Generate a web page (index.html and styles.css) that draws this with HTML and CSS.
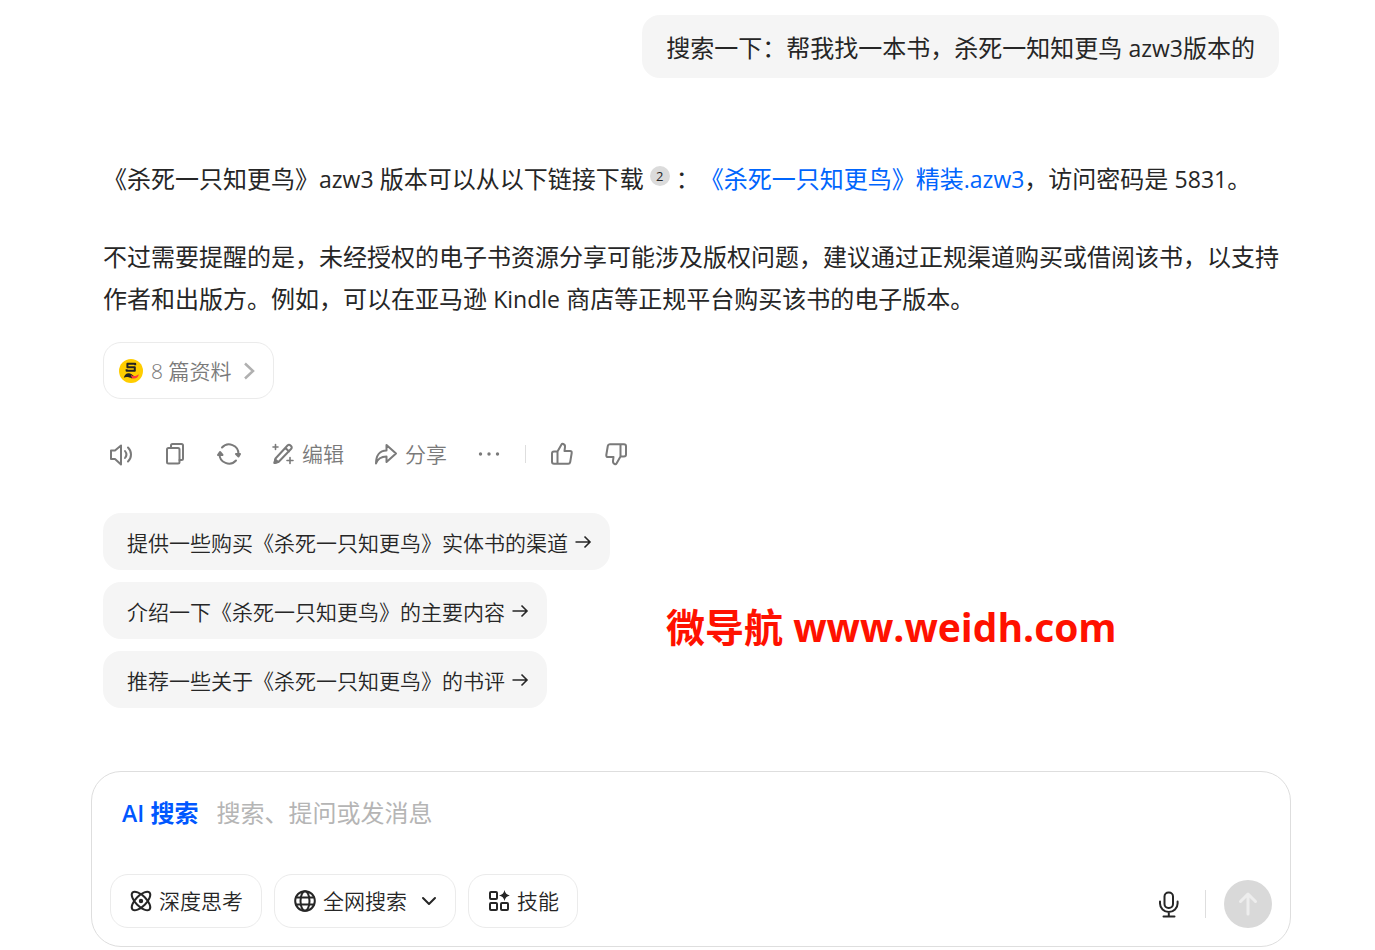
FILE: index.html
```
<!DOCTYPE html>
<html lang="zh-CN">
<head>
  <meta charset="UTF-8" />
  <meta name="viewport" content="width=device-width, initial-scale=1.0"/>
  <title>AI 搜索</title>
  <link rel="stylesheet" href="styles.css">
</head>
<body>
  <div class="page">
    <main class="chat">
      <div class="question">搜索一下：帮我找一本书，杀死一知知更鸟 <span class="latin">azw3</span>版本的</div>

      <div class="answer">
        <p>《杀死一只知更鸟》<span class="latin">azw3</span> 版本可以从以下链接下载<span class="cite">2</span>：<a href="#">《杀死一只知更鸟》精装<span class="latin">.azw3</span></a>，访问密码是 <span class="latin">5831</span>。</p>
        <p>不过需要提醒的是，未经授权的电子书资源分享可能涉及版权问题，建议通过正规渠道购买或借阅该书，以支持作者和出版方。例如，可以在亚马逊 <span class="latin">Kindle</span> 商店等正规平台购买该书的电子版本。</p>
      </div>

      <button class="sources">
        <svg width="24" height="24" viewBox="0 0 24 24">
          <circle cx="12" cy="12" r="12" fill="#ffcd00"/>
          <path d="M16.200 6.200V4.800H8.400V8.200H15.800V11.800H7.600V10.200" fill="none" stroke="#222" stroke-width="2" stroke-linejoin="round"/>
          <path d="M4.800 18.800C5.500 15.500 8 13.500 11 14.500C13 15.200 13.500 16.500 15 17L13 19.500C10 18 7 17.500 4.800 18.800Z" fill="#222"/>
          <path d="M11.500 15.500C14 18 16.500 17.300 19.800 15.200C19.500 18.500 16 20.500 13 19.200Z" fill="#ff3b3b"/>
        </svg>
        <span>8 篇资料</span>
        <svg class="chevron" width="12" height="18" viewBox="0 0 12 18"><path d="M2 1.500l8 7.500-8 7.500"/></svg>
      </button>

      <div class="actions">
        <button aria-label="朗读">
          <svg class="icon" width="24" height="24" viewBox="0 0 24 24"><path d="M2 8.500h4l6-5v19l-6-5.500h-4zM16 9c1.600 2 1.600 5 0 7M19 5.500c4 4 4 10 0 14"/></svg>
        </button>
        <button aria-label="复制">
          <svg class="icon" width="24" height="24" viewBox="0 0 24 24"><rect x="4" y="6" width="12.500" height="15.500" rx="1.500"/><path d="M8 6V3.500q0-1.500 1.500-1.500h9q1.500 0 1.500 1.500v13q0 1.500-1.500 1.500h-2"/></svg>
        </button>
        <button aria-label="重新生成">
          <svg class="icon" width="24" height="24" viewBox="0 0 24 24"><path d="M5 5.500A9.500 9.500 0 0 1 21.500 12M19 18.500A9.500 9.500 0 0 1 2.500 12"/><path class="solid" d="M1 13l2-3 2.500 3zM19 12h4l-1.500 2.500z"/></svg>
        </button>
        <button>
          <svg class="icon" width="24" height="24" viewBox="0 0 24 24"><path d="M3.500 21l1-4.500L16.500 3.500q1.500-1.500 3 0l.5.500q1.500 1.500 0 3L8 19.500zM14.500 6l3.500 3.500"/><path class="solid" d="M3.500 21l.7-3.500 3 2.500z"/><path class="spark" d="M4.500 2.500v5M2 5h5M19 15.500v6M16 18.500h6"/></svg>
          <span>编辑</span>
        </button>
        <button>
          <svg class="icon" width="24" height="24" viewBox="0 0 24 24"><path d="M12.500 3l9.500 8.500-9.500 8.500v-5.500c-5 0-8.500 1.500-10.500 7 0-7.500 3.500-13 10.500-13z"/></svg>
          <span>分享</span>
        </button>
        <button aria-label="更多">
          <svg class="icon" width="24" height="24" viewBox="0 0 24 24"><g class="dots"><circle cx="3.500" cy="12" r="1.700"/><circle cx="12" cy="12" r="1.700"/><circle cx="20.500" cy="12" r="1.700"/></g></svg>
        </button>
        <span class="divider"></span>
        <button aria-label="赞">
          <svg class="icon" width="24" height="24" viewBox="0 0 24 24"><path d="M7.500 9.500l4-7q.6-1 1.800-.5 2 .8 1.700 3L14.500 9H20q2 0 1.700 2l-1.500 9q-.3 1.800-2 1.800H4q-2 0-2-2v-8.300q0-2 2-2zM7.500 9.500v12.300"/></svg>
        </button>
        <button aria-label="踩">
          <svg class="icon" width="24" height="24" viewBox="0 0 24 24"><path d="M16.500 14.500l-4 7q-.6 1-1.800.5-2-.8-1.700-3l.5-4H4q-2 0-1.700-2l1.500-9q.3-1.800 2-1.800H20q2 0 2 2v8.300q0 2-2 2zM16.500 14.500V2.200"/></svg>
        </button>
      </div>

      <div class="suggestions">
        <button>提供一些购买《杀死一只知更鸟》实体书的渠道
          <svg class="arrow" width="18" height="16" viewBox="0 0 18 16"><path d="M1.500 7h14M10.500 1.500L16 7l-5.500 5.500"/></svg>
        </button>
        <button>介绍一下《杀死一只知更鸟》的主要内容
          <svg class="arrow" width="18" height="16" viewBox="0 0 18 16"><path d="M1.500 7h14M10.500 1.500L16 7l-5.500 5.500"/></svg>
        </button>
        <button>推荐一些关于《杀死一只知更鸟》的书评
          <svg class="arrow" width="18" height="16" viewBox="0 0 18 16"><path d="M1.500 7h14M10.500 1.500L16 7l-5.500 5.500"/></svg>
        </button>
      </div>

      <div class="watermark">微导航 www.weidh.com</div>
    </main>

    <form class="composer">
      <div class="input-row">
        <label for="message"><span class="latin">AI</span> 搜索</label>
        <input type="text" id="message" placeholder="搜索、提问或发消息">
      </div>
      <div class="toolbar">
        <button type="button">
          <svg class="icon" width="22" height="22" viewBox="0 0 22 22"><ellipse cx="11" cy="11" rx="12" ry="5.300" transform="rotate(45 11 11)"/><ellipse cx="11" cy="11" rx="12" ry="5.300" transform="rotate(-45 11 11)"/><circle class="solid" cx="11" cy="11" r="1.200"/></svg>
          <span>深度思考</span>
        </button>
        <button type="button">
          <svg class="icon" width="22" height="22" viewBox="0 0 22 22"><circle cx="11" cy="11" r="9.800"/><ellipse cx="11" cy="11" rx="4.500" ry="9.800"/><path d="M2 7.500h18M2 14.500h18"/></svg>
          <span>全网搜索</span>
          <svg class="icon caret" width="16" height="16" viewBox="0 0 16 16"><path d="M2 5l6 6 6-6"/></svg>
        </button>
        <button type="button">
          <svg class="icon" width="22" height="22" viewBox="0 0 22 22"><rect x="2" y="2" width="7" height="7" rx="1"/><rect x="2" y="13" width="7" height="7" rx="1"/><rect x="13" y="13" width="7" height="7" rx="1"/><path class="star" d="M16.500 0q.8 4.700 5.500 5.500-4.700.8-5.500 5.500-.8-4.700-5.500-5.500 4.700-.8 5.500-5.500z"/></svg>
          <span>技能</span>
        </button>
        <div class="send-group">
          <button type="button" class="mic" aria-label="语音输入">
            <svg class="icon" width="24" height="28" viewBox="0 0 24 28"><rect x="7.500" y="2.500" width="8.500" height="15.500" rx="4"/><path d="M3 11.500v2a8.800 8.500 0 0 0 17.600 0v-2M11.800 22v4M6.500 26.500h11"/></svg>
          </button>
          <span class="divider"></span>
          <button type="submit" class="send" aria-label="发送" disabled>
            <svg width="24" height="24" viewBox="0 0 24 24"><path d="M12 22V3M4.500 9.500L12 2l7.500 7.500"/></svg>
          </button>
        </div>
      </div>
    </form>
  </div>
</body>
</html>
```

FILE: styles.css
```
* {
  box-sizing: border-box;
}

body {
  margin: 0;
  background: #fff;
  color: #262626;
  font-family: "Open Sans", "Noto Sans CJK SC", sans-serif;
  font-size: 24px;
  line-height: 42px;
  text-spacing-trim: space-all;
}

button {
  display: flex;
  align-items: center;
  margin: 0;
  padding: 0;
  border: none;
  background: none;
  color: inherit;
  font-family: inherit;
  font-size: 21px;
  font-weight: 350;
  line-height: 32px;
  cursor: pointer;
}

svg {
  display: block;
  flex: none;
  overflow: visible;
}

.latin {
  font-size: 23px;
}

.page {
  padding: 15px 84px 0 91px;
}

.chat {
  position: relative;
  display: flex;
  flex-direction: column;
  align-items: flex-start;
  padding: 0 12px;
}

.question {
  align-self: flex-end;
  padding: 12px 24px 9px;
  border-radius: 18px;
  background: #f5f5f5;
}

.answer {
  margin-top: 80px;
}

.answer p {
  margin: 0 0 36px;
}

.answer p:last-child {
  margin-bottom: 22px;
}

.answer a {
  color: #0065fd;
  text-decoration: none;
}

.cite {
  display: inline-block;
  width: 20px;
  height: 20px;
  margin: 0 6px;
  border-radius: 10px;
  background: #dbdbdb;
  font-size: 13px;
  line-height: 20px;
  text-align: center;
  vertical-align: 7px;
}

.sources {
  height: 57px;
  padding: 0 18px 0 15px;
  gap: 8px;
  border: 1px solid #ebebeb;
  border-radius: 18px;
  color: #7a7a7a;
}

.chevron {
  margin-left: 4px;
  fill: none;
  stroke: #b0b0b0;
  stroke-width: 2.5;
}

.icon {
  fill: none;
  stroke: currentColor;
  stroke-width: 2;
  stroke-linecap: round;
  stroke-linejoin: round;
}

.solid {
  fill: currentColor;
}

.dots,
.star {
  fill: currentColor;
  stroke: none;
}

.spark {
  stroke-width: 1.6;
}

.actions {
  display: flex;
  align-items: center;
  gap: 30px;
  height: 32px;
  margin: 39px 0 43px;
  padding-left: 6px;
  color: #7a7a7a;
}

.actions button {
  gap: 7px;
}

.divider {
  width: 1px;
  height: 18px;
  background: #dedede;
}

.actions .divider {
  margin: 0 -6px;
}

.suggestions {
  display: flex;
  flex-direction: column;
  align-items: flex-start;
  gap: 12px;
}

.suggestions button {
  height: 57px;
  padding: 2px 18px 0 24px;
  gap: 6px;
  border-radius: 18px;
  background: #f5f5f5;
}

.arrow {
  fill: none;
  stroke: #262626;
  stroke-width: 1.6;
}

.watermark {
  position: absolute;
  left: 575px;
  top: 586px;
  color: #ff1100;
  font-size: 39px;
  font-weight: 700;
  line-height: 52px;
  white-space: nowrap;
}

.composer {
  height: 176px;
  margin-top: 63px;
  padding: 20px 18px 18px;
  border: 1px solid #dedede;
  border-radius: 30px;
}

.input-row {
  display: flex;
  gap: 18px;
  padding: 0 12px;
}

.input-row label {
  color: #0057ff;
  font-weight: 700;
}

.input-row label .latin {
  font-weight: 600;
}

.input-row input {
  flex: 1;
  height: 42px;
  padding: 0;
  border: none;
  outline: none;
  background: none;
  font: inherit;
}

.input-row input::placeholder {
  color: #b5b5b5;
}

.toolbar {
  display: flex;
  align-items: center;
  gap: 12px;
  margin-top: 40px;
}

.toolbar button {
  height: 54px;
  padding: 0 18px 0 19px;
  gap: 7px;
  border: 1px solid #ebebeb;
  border-radius: 18px;
}

.toolbar .caret {
  margin-left: 7px;
}

.send-group {
  display: flex;
  align-items: center;
  gap: 12px;
  margin-left: auto;
  padding-top: 6px;
}

.toolbar .mic {
  height: 48px;
  padding: 0 12px;
  border: none;
}

.send-group .divider {
  height: 28px;
  margin-right: 6px;
}

.toolbar .send {
  justify-content: center;
  width: 48px;
  height: 48px;
  padding: 0;
  border: none;
  border-radius: 24px;
  background: #d9d9d9;
}

.send path {
  fill: none;
  stroke: #ededed;
  stroke-width: 3;
  stroke-linecap: round;
  stroke-linejoin: round;
}
```
